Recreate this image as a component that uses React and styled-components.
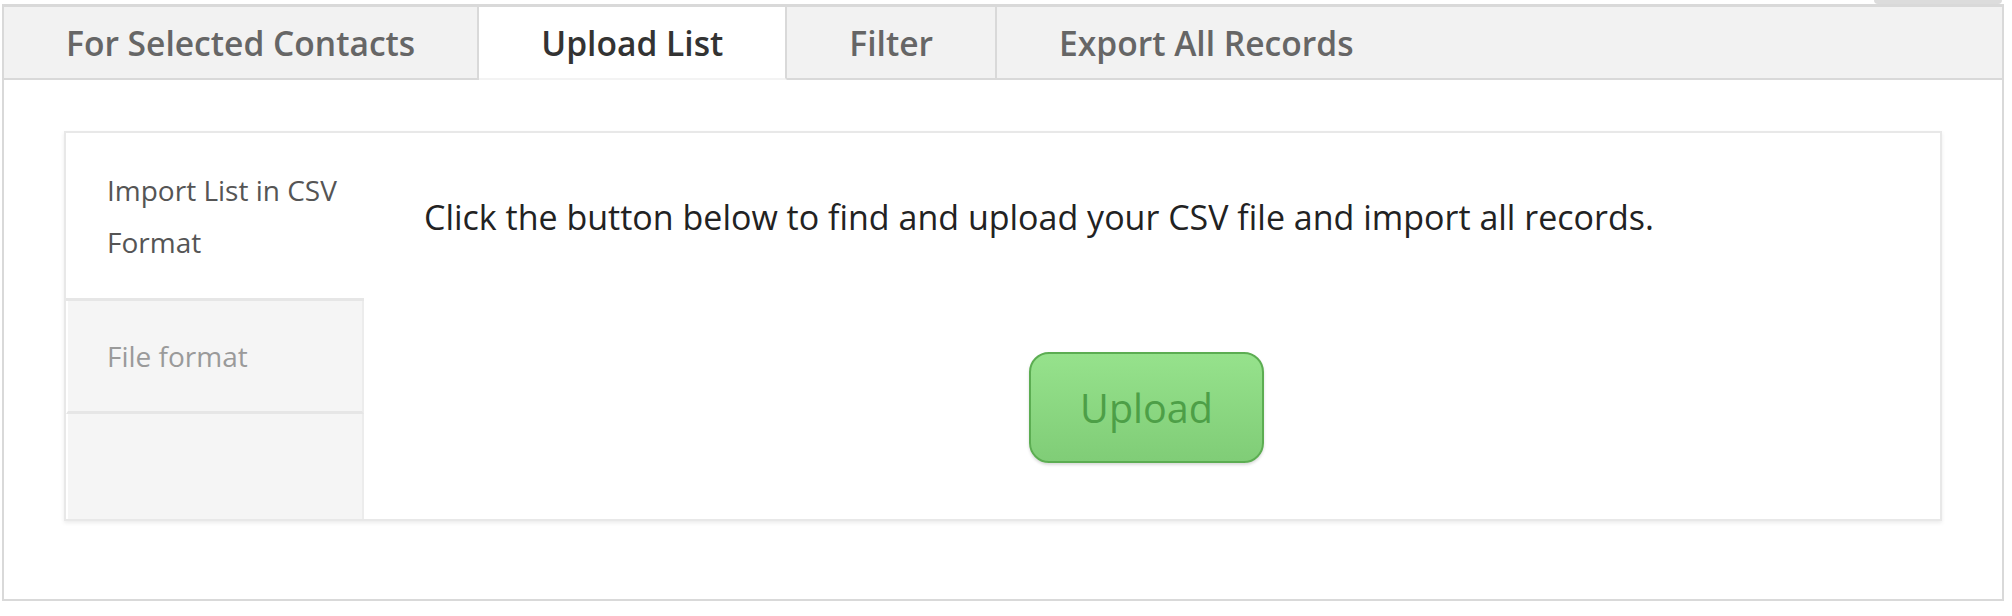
import React from "react";
import styled, { createGlobalStyle } from "styled-components";

const Global = createGlobalStyle`
  html, body { margin: 0; padding: 0; background: #ffffff; }
  body { font-family: "Open Sans", "Noto Sans", sans-serif; }
  * { box-sizing: border-box; }
`;

const Page = styled.div`
  width: 2012px;
  padding: 0 8px 0 2px;
`;

const TopStrip = styled.div`
  display: flex;
  justify-content: flex-end;
  height: 4px;
`;

const StripPiece = styled.div`
  width: 128px;
  height: 4px;
  margin-right: 2px;
  background: #dcdcdc;
  border-radius: 0 0 4px 4px;
`;

const Frame = styled.div`
  border: 2px solid #d9d9d9;
  border-top-width: 3px;
  background: #fff;
`;

const TabBar = styled.div`
  display: flex;
  height: 73px;
  background: #f2f2f2;
  border-bottom: 2px solid #d9d9d9;
`;

const Tab = styled.div`
  display: flex;
  align-items: center;
  padding: 0 62px;
  height: 73px;
  font-size: 33.6px;
  font-weight: 600;
  color: ${(p) => (p.$active ? "#333333" : "#666666")};
  background: ${(p) => (p.$active ? "#ffffff" : "transparent")};
  border-right: ${(p) => (p.$last ? "none" : "2px solid #d9d9d9")};
  border-bottom: 2px solid ${(p) => (p.$active ? "#f3f3f3" : "#d9d9d9")};
  flex: ${(p) => (p.$last ? "1" : "none")};
  white-space: nowrap;
`;

const Content = styled.div`
  padding: 51px 60px 78px 60px;
`;

const Panel = styled.div`
  display: flex;
  height: 390px;
  border: 2px solid #e8e8e8;
  box-shadow: 0 2px 4px rgba(0, 0, 0, 0.08);
  background: #fff;
`;

const Sidebar = styled.div`
  width: 298px;
  display: flex;
  flex-direction: column;
`;

const SideItem = styled.div`
  padding: ${(p) =>
    p.$fill ? "0" : p.$active ? "31px 8px 30px 41px" : "29px 8px 29px 39px"};
  flex: ${(p) => (p.$fill ? "1" : "none")};
  font-size: 28px;
  line-height: 52px;
  color: ${(p) => (p.$active ? "#555555" : "#9a9a9a")};
  background: ${(p) => (p.$active ? "#ffffff" : "#f5f5f5")};
  border-bottom: ${(p) => (p.$fill ? "none" : "3px solid #e6e6e6")};
  border-right: ${(p) => (p.$active ? "none" : "2px solid #ececec")};
  border-left: ${(p) => (p.$active ? "none" : "2px solid #ffffff")};
  white-space: ${(p) => (p.$active ? "normal" : "nowrap")};
`;

const Main = styled.div`
  flex: 1;
  display: flex;
  flex-direction: column;
  padding: 61px 40px 0 60px;
`;

const Lead = styled.p`
  margin: 0;
  font-size: 34px;
  line-height: 47px;
  color: #222222;
  white-space: nowrap;
`;

const ButtonRow = styled.div`
  display: flex;
  justify-content: center;
  padding-top: 111px;
  padding-right: 31px;
`;

const UploadButton = styled.button`
  width: 235px;
  height: 111px;
  border: 2px solid #5cad52;
  border-radius: 20px;
  background: linear-gradient(#96e28c, #80cd77);
  color: #4d9f47;
  font-family: "Open Sans", "Noto Sans", sans-serif;
  font-size: 39.5px;
  box-shadow: 0 2px 3px rgba(0, 0, 0, 0.15);
  cursor: pointer;
`;

const tabs = ["For Selected Contacts", "Upload List", "Filter", "Export All Records"];

export default function App() {
  return (
    <Page>
      <Global />
      <TopStrip>
        <StripPiece />
      </TopStrip>
      <Frame>
        <TabBar>
          {tabs.map((t, i) => (
            <Tab key={t} $active={i === 1} $last={i === tabs.length - 1}>
              {t}
            </Tab>
          ))}
        </TabBar>
        <Content>
          <Panel>
            <Sidebar>
              <SideItem $active>Import List in CSV Format</SideItem>
              <SideItem>File format</SideItem>
              <SideItem $fill />
            </Sidebar>
            <Main>
              <Lead>
                Click the button below to find and upload your CSV file and import all records.
              </Lead>
              <ButtonRow>
                <UploadButton>Upload</UploadButton>
              </ButtonRow>
            </Main>
          </Panel>
        </Content>
      </Frame>
    </Page>
  );
}
